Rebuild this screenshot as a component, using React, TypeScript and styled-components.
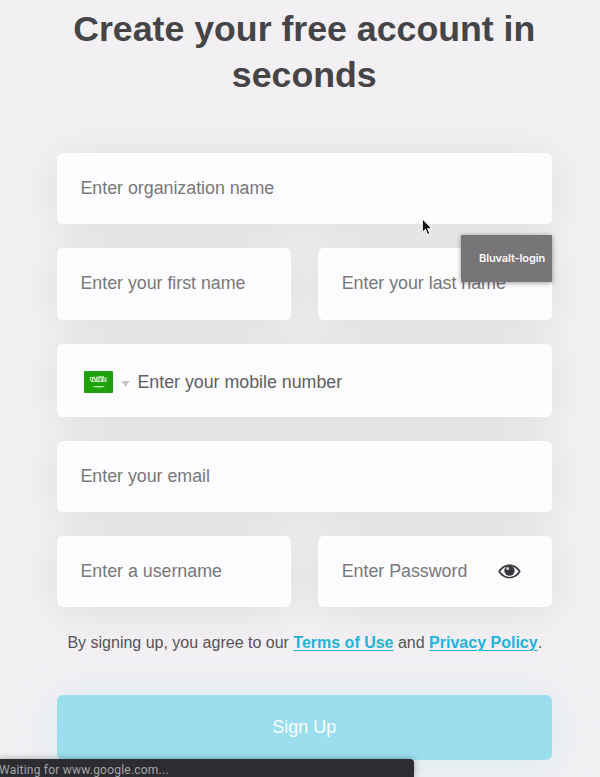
import React from 'react';
import styled, { createGlobalStyle } from 'styled-components';

const GlobalStyle = createGlobalStyle`
  * { box-sizing: border-box; }
  body {
    margin: 0;
    background: #f2f0f3;
    font-family: "Liberation Sans", Arial, sans-serif;
    color: #454447;
  }
`;

const Page = styled.div`
  position: relative;
  height: 777px;
  overflow: hidden;
  padding: 5.5px 48px 0 56.5px;
`;

const Title = styled.h1`
  margin: 0;
  height: 147.3px;
  font-size: 35.7px;
  line-height: 46px;
  font-weight: 700;
  text-align: center;
  color: #454447;
`;

const Form = styled.form`
  position: relative;
  z-index: 0;
  display: flex;
  flex-direction: column;
`;

const Row = styled.div<{ $height?: number }>`
  display: flex;
  gap: 27px;
  height: ${(p) => p.$height ?? 71.4}px;
  margin-bottom: 24px;
`;

const Field = styled.div<{ $dark?: boolean }>`
  position: relative;
  flex: 1;
  display: flex;
  align-items: center;
  padding: 0 24px;
  border-radius: 6px;
  background: #fdfcfe;
  font-size: 17.85px;
  letter-spacing: -0.03px;
  white-space: nowrap;
  color: ${(p) => (p.$dark ? '#606063' : '#79787b')};

  &::before {
    content: '';
    position: absolute;
    inset: 0;
    z-index: -1;
    border-radius: 6px;
    box-shadow: 0 4px 44px rgba(20, 20, 20, 0.085);
  }
`;

const Country = styled.span`
  display: flex;
  align-items: center;
  gap: 8px;
  margin: 4px 8px 0 3px;

  svg:last-child {
    margin-top: 4px;
  }
`;

const MobileLabel = styled.span`
  padding-top: 4px;
`;

const EyeButton = styled.span`
  display: flex;
  margin-left: auto;
  margin-right: 7px;
`;

const Terms = styled.p`
  margin: 0 -11px 0 -10px;
  height: 64px;
  line-height: 24px;
  font-size: 16px;
  text-align: center;
  white-space: nowrap;
  color: #555457;
`;

const TermsLink = styled.a`
  font-weight: 700;
  color: #1fb3da;
  text-decoration: underline;
  text-decoration-thickness: 1px;
  text-underline-offset: 2px;
`;

const SubmitButton = styled.button`
  height: 65px;
  padding: 0;
  border: 0;
  border-radius: 6px;
  background: #9bdfee;
  box-shadow: 0 4px 40px rgba(155, 223, 238, 0.28);
  color: #fbfdfe;
  font: 18px "Liberation Sans", Arial, sans-serif;
`;

const Tooltip = styled.div`
  position: absolute;
  left: 461px;
  top: 235px;
  width: 91px;
  height: 47px;
  padding-left: 18px;
  background: #777578;
  box-shadow: 0 1px 5px rgba(0, 0, 0, 0.4);
  color: #fbfafc;
  font: 600 11px/46px Inter, sans-serif;
  letter-spacing: -0.1px;
  white-space: nowrap;
`;

const Pointer = styled.svg`
  position: absolute;
  left: 420px;
  top: 217px;
`;

const StatusBar = styled.div`
  position: absolute;
  left: -1px;
  top: 759px;
  width: 415px;
  height: 18px;
  border-radius: 0 4px 0 0;
  background: #2c2c31;
  box-shadow: 0 0 7px rgba(0, 0, 0, 0.35);
  color: #a6a5a9;
  font: 12px/22px Roboto, sans-serif;
  letter-spacing: 0.22px;
  white-space: nowrap;
`;

const Flag = () => (
  <svg width="29" height="22" viewBox="0 0 29 22">
    <rect width="29" height="22" rx="1" fill="#1fa10b" />
    <g fill="none" stroke="#d3f0cd" strokeWidth="0.9">
      <path d="M6.5 6v3q0 1.5 2 1.2V6M8.5 8h3M10 5.7l2 4.5 1-4.5v4.5h2V6M14 7h3M16.5 5.5l1.5 5 1-5v5M19.5 6l2.5 4.5V6M7 10.4h14.5M7 6.5h4M14 5.8h6" />
      <path d="M8.5 15.5h12M11 16h8" strokeWidth="0.7" />
    </g>
  </svg>
);

const Caret = () => (
  <svg width="9" height="6" viewBox="0 0 9 6">
    <path d="M0.5 0h8L4.5 6z" fill="#c6c5c9" />
  </svg>
);

const Eye = () => (
  <svg width="23" height="18" viewBox="0 0 23 18">
    <path
      fillRule="evenodd"
      fill="#38373b"
      d="M.3 8.5C5.2-.8 17.8-.8 22.7 8.5 17.8 17.6 5.2 17.6.3 8.5zM2.3 8.5C6.8 15.7 16.2 15.7 20.7 8.5 16.2 1.5 6.8 1.5 2.3 8.5z"
    />
    <circle cx="11.5" cy="7.6" r="5.2" fill="#38373b" />
    <circle cx="9.7" cy="5.6" r="1.5" fill="#d4d3d6" />
  </svg>
);

export default function App() {
  return (
    <>
      <GlobalStyle />
      <Page>
        <Title>
          Create your free account in
          <br />
          seconds
        </Title>
        <Form>
          <Row>
            <Field>Enter organization name</Field>
          </Row>
          <Row>
            <Field>Enter your first name</Field>
            <Field>Enter your last name</Field>
          </Row>
          <Row $height={73}>
            <Field $dark>
              <Country>
                <Flag />
                <Caret />
              </Country>
              <MobileLabel>Enter your mobile number</MobileLabel>
            </Field>
          </Row>
          <Row>
            <Field>Enter your email</Field>
          </Row>
          <Row>
            <Field>Enter a username</Field>
            <Field>
              Enter Password
              <EyeButton>
                <Eye />
              </EyeButton>
            </Field>
          </Row>
          <Terms>
            By signing up, you agree to our <TermsLink>Terms of Use</TermsLink> and{' '}
            <TermsLink>Privacy Policy</TermsLink>.
          </Terms>
          <SubmitButton type="button">Sign Up</SubmitButton>
        </Form>
        <Tooltip>Bluvalt-login</Tooltip>
        <Pointer width="13" height="20" viewBox="0 0 12 19">
          <path
            d="M2 1.5v13.2l3-2.8 2.1 5 2.2-.9-2.1-4.9h4.1z"
            fill="#111"
            stroke="#fff"
            strokeWidth="1"
          />
        </Pointer>
        <StatusBar>Waiting for www.google.com...</StatusBar>
      </Page>
    </>
  );
}
